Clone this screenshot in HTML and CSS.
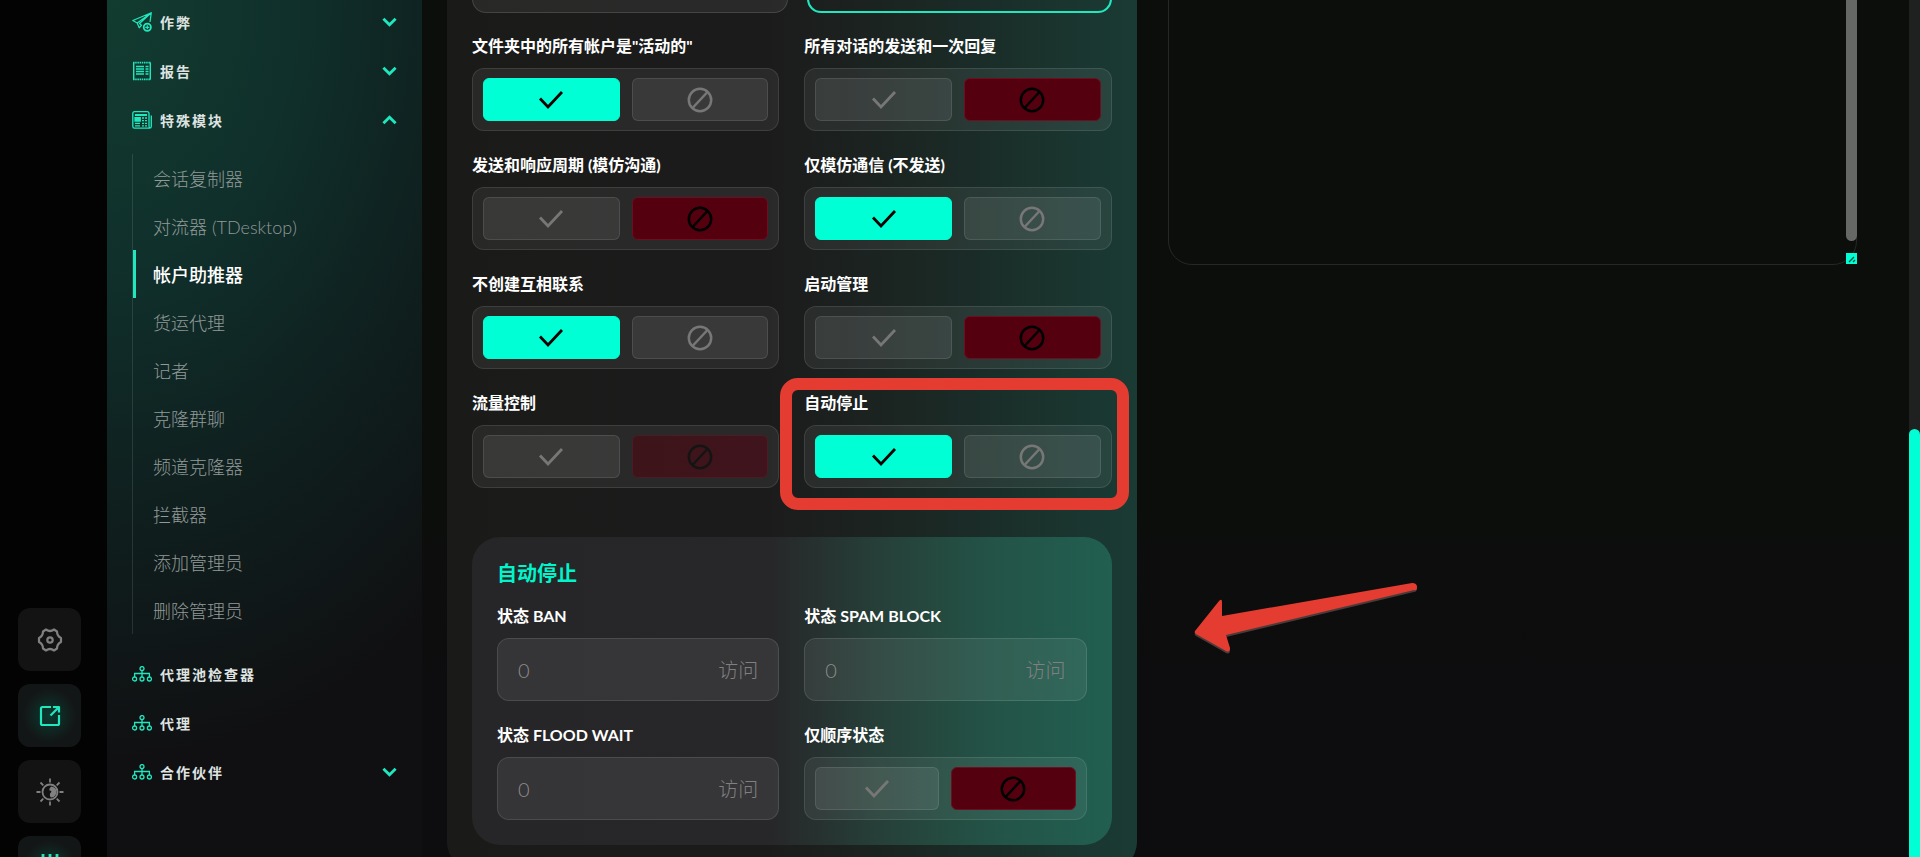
FILE: index.html
```html
<!DOCTYPE html>
<html lang="zh-CN">
<head>
    <meta charset="UTF-8">
    <meta name="viewport" content="width=device-width, initial-scale=1.0">
    <title>帐户助推器</title>
    <link rel="stylesheet" href="styles.css">
</head>
<body>
    <svg class="sprite">
        <symbol id="i-check" viewBox="0 0 26 20"><path d="M2 8.5l8 8.5L24 2" fill="none" stroke="currentColor" stroke-width="2.8"/></symbol>
        <symbol id="i-ban" viewBox="0 0 26 26"><g fill="none" stroke="currentColor" stroke-width="2.5"><circle cx="13" cy="13" r="11.2"/><path d="M5.5 21L20.5 5"/></g></symbol>
        <symbol id="i-down" viewBox="0 0 16 10"><path d="M1.5 1.5L8 8l6.500-6.500" fill="none" stroke="currentColor" stroke-width="3"/></symbol>
        <symbol id="i-tree" viewBox="0 0 20 16"><g fill="none" stroke="currentColor" stroke-width="1.300"><circle cx="10" cy="2.600" r="2"/><circle cx="2.600" cy="13" r="2"/><circle cx="10" cy="13" r="2"/><circle cx="17.400" cy="13" r="2"/><path d="M10 4.600V11M2.600 11V7.500h14.800V11"/></g></symbol>
    </svg>

    <div class="app">
        <aside class="rail">
            <button class="rail-btn">
                <svg width="26" height="26" viewBox="0 0 26 26" fill="none" stroke="currentColor" stroke-width="2.200" stroke-linejoin="round"><path d="M9 2.500Q13 5.500 17 2.500L20 4.500Q20 9 24 11V15Q20 17 20 21.500L17 23.500Q13 20.500 9 23.500L6 21.500Q6 17 2 15V11Q6 9 6 4.500Z"/><circle cx="13" cy="13" r="2.700"/></svg>
            </button>
            <button class="rail-btn rail-btn-on">
                <svg width="22" height="22" viewBox="0 0 22 22" fill="none" stroke="currentColor" stroke-width="2.200"><path d="M12 2H3.500Q2 2 2 3.500V18.500Q2 20 3.500 20H18.500Q20 20 20 18.500V10M14 2H20.500M20 1.500V7.500M20 2L11.500 10.500"/></svg>
            </button>
            <button class="rail-btn">
                <svg width="28" height="28" viewBox="0 0 28 28" fill="none" stroke="currentColor" stroke-width="1.800"><circle cx="14" cy="14" r="7.500"/><path d="M15 8.500a5.500 5.500 0 1 1 0 11a4 4 0 0 1-1-4q3-3-.5-3q-.5-2 1.500-4z" fill="currentColor" stroke="none"/><path d="M14 .5v4M14 23.500v4M.5 14h4M23.500 14h4M4.500 4.500l2.800 2.800M20.700 20.700l2.800 2.800M4.500 23.500l2.800-2.800M20.700 7.300l2.800-2.800"/></svg>
            </button>
            <button class="rail-btn rail-btn-on">
                <svg width="22" height="30" viewBox="0 0 22 30" fill="none" stroke="currentColor" stroke-width="2.800"><path d="M4 1V29M11 1V29M18 1V29"/></svg>
            </button>
        </aside>

        <nav class="sidebar">
            <a class="nav-item" href="#">
                <svg class="nav-icon" viewBox="0 0 20 20" fill="none" stroke="currentColor" stroke-width="1.200" stroke-linejoin="round"><path d="M19.300.7L.8 8.500l4.400 2.600L19.300.7L18 10M5.200 11.100l2 4.700 2.500-2.800M19.300.7L7.500 11.500l2.200 2"/><circle cx="15.300" cy="15.300" r="3.600" stroke-width="1.800"/><path d="M15.300 13.300v4M13.300 15.300h4"/></svg>
                <span>作弊</span>
                <svg class="chevron"><use href="#i-down"/></svg>
            </a>
            <a class="nav-item" href="#">
                <svg class="nav-icon" viewBox="0 0 20 20" fill="none" stroke="currentColor" stroke-width="1.400"><path d="M1.700 1.500V18.500M18.300 1.500V18.500"/><path d="M1 1.700H19M1 18.300H19" stroke-width="1.800" stroke-dasharray="1.500 .7"/><path d="M4 5.500h8M4 8h8M4 10.500h8M4 13h8M13.500 5.500h3M13.500 8h3M13.500 10.500h3M13.500 13h3"/></svg>
                <span>报告</span>
                <svg class="chevron"><use href="#i-down"/></svg>
            </a>
            <a class="nav-item" href="#">
                <svg class="nav-icon" viewBox="0 0 20 20" fill="none" stroke="currentColor" stroke-width="1.300"><path d="M17 16V3.500Q17 1.700 15.200 1.700H2.500Q.8 1.700.8 3.500V16.500Q.8 18.200 2.500 18.200H17.500Q19.300 18.200 19.300 16.500V5.500M17 16Q17 18 18.200 18"/><path d="M3 5h12" stroke-width="2"/><path d="M3 7.700h5.200V11H3z" fill="currentColor"/><path d="M10 8h2M13 8h2M10 10.700h2M13 10.700h2M3 13.300h5M10 13.300h2M13 13.300h2M3 15.800h5M10 15.800h2M13 15.800h2"/></svg>
                <span>特殊模块</span>
                <svg class="chevron chevron-up"><use href="#i-down"/></svg>
            </a>
            <div class="submenu">
                <a href="#">会话复制器</a>
                <a href="#">对流器 (TDesktop)</a>
                <a href="#" class="active">帐户助推器</a>
                <a href="#">货运代理</a>
                <a href="#">记者</a>
                <a href="#">克隆群聊</a>
                <a href="#">频道克隆器</a>
                <a href="#">拦截器</a>
                <a href="#">添加管理员</a>
                <a href="#">删除管理员</a>
            </div>
            <a class="nav-item" href="#">
                <svg class="nav-icon tree"><use href="#i-tree"/></svg>
                <span>代理池检查器</span>
            </a>
            <a class="nav-item" href="#">
                <svg class="nav-icon tree"><use href="#i-tree"/></svg>
                <span>代理</span>
            </a>
            <a class="nav-item" href="#">
                <svg class="nav-icon tree"><use href="#i-tree"/></svg>
                <span>合作伙伴</span>
                <svg class="chevron"><use href="#i-down"/></svg>
            </a>
        </nav>

        <main class="content">
            <section class="card">
                <div class="top-fields">
                    <div class="top-field"></div>
                    <div class="top-field selected"></div>
                </div>

                <div class="options">
                    <div class="option">
                        <span class="caption" id="c1">文件夹中的所有帐户是"活动的"</span>
                        <div class="toggle" role="radiogroup" aria-labelledby="c1">
                            <label class="yes"><input type="radio" name="o1" checked><svg><use href="#i-check"/></svg></label>
                            <label class="no"><input type="radio" name="o1"><svg><use href="#i-ban"/></svg></label>
                        </div>
                    </div>
                    <div class="option">
                        <span class="caption" id="c2">所有对话的发送和一次回复</span>
                        <div class="toggle" role="radiogroup" aria-labelledby="c2">
                            <label class="yes"><input type="radio" name="o2"><svg><use href="#i-check"/></svg></label>
                            <label class="no"><input type="radio" name="o2" checked><svg><use href="#i-ban"/></svg></label>
                        </div>
                    </div>
                    <div class="option">
                        <span class="caption" id="c3">发送和响应周期 (模仿沟通)</span>
                        <div class="toggle" role="radiogroup" aria-labelledby="c3">
                            <label class="yes"><input type="radio" name="o3"><svg><use href="#i-check"/></svg></label>
                            <label class="no"><input type="radio" name="o3" checked><svg><use href="#i-ban"/></svg></label>
                        </div>
                    </div>
                    <div class="option">
                        <span class="caption" id="c4">仅模仿通信 (不发送)</span>
                        <div class="toggle" role="radiogroup" aria-labelledby="c4">
                            <label class="yes"><input type="radio" name="o4" checked><svg><use href="#i-check"/></svg></label>
                            <label class="no"><input type="radio" name="o4"><svg><use href="#i-ban"/></svg></label>
                        </div>
                    </div>
                    <div class="option">
                        <span class="caption" id="c5">不创建互相联系</span>
                        <div class="toggle" role="radiogroup" aria-labelledby="c5">
                            <label class="yes"><input type="radio" name="o5" checked><svg><use href="#i-check"/></svg></label>
                            <label class="no"><input type="radio" name="o5"><svg><use href="#i-ban"/></svg></label>
                        </div>
                    </div>
                    <div class="option">
                        <span class="caption" id="c6">启动管理</span>
                        <div class="toggle" role="radiogroup" aria-labelledby="c6">
                            <label class="yes"><input type="radio" name="o6"><svg><use href="#i-check"/></svg></label>
                            <label class="no"><input type="radio" name="o6" checked><svg><use href="#i-ban"/></svg></label>
                        </div>
                    </div>
                    <div class="option">
                        <span class="caption" id="c7">流量控制</span>
                        <div class="toggle" role="radiogroup" aria-labelledby="c7">
                            <label class="yes"><input type="radio" name="o7"><svg><use href="#i-check"/></svg></label>
                            <label class="no faded"><input type="radio" name="o7" checked><svg><use href="#i-ban"/></svg></label>
                        </div>
                    </div>
                    <div class="option marked">
                        <span class="caption" id="c8">自动停止</span>
                        <div class="toggle" role="radiogroup" aria-labelledby="c8">
                            <label class="yes"><input type="radio" name="o8" checked><svg><use href="#i-check"/></svg></label>
                            <label class="no"><input type="radio" name="o8"><svg><use href="#i-ban"/></svg></label>
                        </div>
                    </div>
                </div>

                <div class="panel">
                    <h2>自动停止</h2>
                    <div class="options">
                        <div class="option">
                            <label class="caption" for="ban">状态 BAN</label>
                            <div class="field"><input id="ban" type="text" placeholder="0"><span>访问</span></div>
                        </div>
                        <div class="option">
                            <label class="caption" for="spam">状态 SPAM BLOCK</label>
                            <div class="field"><input id="spam" type="text" placeholder="0"><span>访问</span></div>
                        </div>
                        <div class="option">
                            <label class="caption" for="flood">状态 FLOOD WAIT</label>
                            <div class="field"><input id="flood" type="text" placeholder="0"><span>访问</span></div>
                        </div>
                        <div class="option">
                            <span class="caption" id="c9">仅顺序状态</span>
                            <div class="toggle" role="radiogroup" aria-labelledby="c9">
                                <label class="yes"><input type="radio" name="o9"><svg><use href="#i-check"/></svg></label>
                                <label class="no"><input type="radio" name="o9" checked><svg><use href="#i-ban"/></svg></label>
                            </div>
                        </div>
                    </div>
                </div>
            </section>

            <section class="log">
                <textarea class="log-text" readonly></textarea>
                <div class="log-thumb"></div>
                <svg class="log-grip" viewBox="0 0 11 11"><path d="M3 9l5-5M7 9l2-2" stroke="#064a40" stroke-width="1.200"/></svg>
                <svg class="arrow" viewBox="0 0 226 74">
                    <path class="arrow-shadow" d="M2 51L26 21Q29 18 29 22V36L219 3Q224 2 224 6T221 10L33 55L37 68Q37 73 33 71L3 54Q1 53 2 51Z"/>
                    <path d="M2 49L26 19Q29 16 29 20V34L219 1Q224 1 224 5T221 8L33 53L37 66Q37 71 33 69L3 52Q1 51 2 49Z"/>
                </svg>
            </section>
        </main>

        <div class="scroll-track"><div class="scroll-thumb"></div></div>
    </div>
</body>
</html>
```

FILE: styles.css
```css
* {
    box-sizing: border-box;
}

body {
    margin: 0;
    overflow: hidden;
    font-family: Lato, 'Noto Sans CJK SC', sans-serif;
    background: linear-gradient(#0c0e0c 60%, #0d0c0e 80%);
    color: #fff;
}

a {
    color: inherit;
    text-decoration: none;
}

.sprite {
    display: none;
}

.app {
    display: flex;
    height: 100vh;
    overflow: hidden;
}

/* icon rail */
.rail {
    display: flex;
    flex-direction: column;
    justify-content: flex-end;
    align-items: flex-start;
    gap: 13px;
    flex: 0 0 107px;
    padding-left: 18px;
    margin-bottom: -42px;
    background: #030303;
}

.rail-btn {
    display: flex;
    justify-content: center;
    align-items: center;
    flex: none;
    width: 63px;
    height: 63px;
    padding: 0;
    border: 0;
    border-radius: 12px;
    background: #131313;
    color: #808080;
}

.rail-btn-on {
    background: radial-gradient(circle, #0b3a30, #131616 60%);
    color: #1fe8bf;
}

/* sidebar */
.sidebar {
    flex: 0 0 315px;
    background: radial-gradient(ellipse 540px 760px at 0 0, #123c30, #10302b 35%, #0f201f 65%, #101012 100%);
}

.nav-item {
    display: flex;
    align-items: center;
    gap: 8px;
    height: 49px;
    padding: 0 25px;
    color: #dfe3e1;
    font-size: 14px;
    font-weight: bold;
    letter-spacing: 2px;
}

.nav-item:first-child {
    margin-top: -3px;
}

.nav-icon {
    width: 20px;
    height: 20px;
    color: #1fe8bf;
}

.nav-icon.tree {
    height: 16px;
}

.chevron {
    width: 15px;
    height: 10px;
    margin-left: auto;
    color: #1fe8bf;
}

.chevron-up {
    transform: rotate(180deg);
}

.submenu {
    margin: 10px 25px 15px;
    border-left: 1px solid #ffffff1c;
}

.submenu a {
    display: flex;
    align-items: center;
    height: 48px;
    padding-left: 20px;
    color: #929a98;
    font-size: 18px;
    font-weight: 300;
}

.submenu .active {
    padding-left: 17px;
    border-left: 3px solid #1fe8bf;
    color: #fff;
    font-weight: 500;
}

/* content */
.content {
    display: grid;
    grid-template-columns: repeat(2, minmax(0, 1fr));
    gap: 31px;
    flex: 1;
    align-items: start;
    padding: 0 52px 0 25px;
}

.card {
    padding: 0 25px 25px;
    border-radius: 0 0 28px 28px;
    background: linear-gradient(90deg, #1a1b19, #1c1b1c 46%, #1b2421 64%, #1a3b34);
}

.top-fields {
    display: flex;
    gap: 19px;
    height: 62px;
    margin: -49px 0 23px;
}

.top-field {
    flex: 1 1 316px;
    border: 1px solid #ffffff22;
    border-radius: 14px;
    background: #ffffff10;
}

.top-field.selected {
    flex-basis: 305px;
    border: 2px solid #1fe8bf;
    background: none;
}

.options {
    display: grid;
    grid-template-columns: repeat(2, minmax(0, 1fr));
    gap: 24px 25px;
}

.option {
    display: flex;
    flex-direction: column;
    gap: 12px;
}

.caption {
    font-size: 16px;
    font-weight: bold;
    line-height: 20px;
}

.toggle {
    display: flex;
    gap: 12px;
    padding: 9px 10px;
    border: 1px solid #ffffff1a;
    border-radius: 12px;
    background: #ffffff10;
}

.toggle label {
    display: flex;
    justify-content: center;
    align-items: center;
    flex: 1;
    height: 43px;
    border: 1px solid #ffffff1a;
    border-radius: 6px;
    background: #ffffff14;
    color: #777;
}

.toggle input {
    position: absolute;
    opacity: 0;
}

.toggle svg {
    width: 26px;
    height: 26px;
}

.toggle .yes:has(input:checked) {
    border-color: #00ffd4;
    background: #00ffd4;
    color: #000;
}

.toggle .no:has(input:checked) {
    border-color: #6b1020;
    background: #54000f;
    color: #000;
}

.toggle .no.faded {
    opacity: 0.5;
}

.marked {
    position: relative;
}

.marked::after {
    content: '';
    position: absolute;
    inset: -15px -17px -22px -24px;
    border: 12px solid #e43c30;
    border-radius: 18px;
    pointer-events: none;
}

.panel {
    margin-top: 49px;
    padding: 24px 25px 25px;
    border-radius: 28px;
    background: linear-gradient(90deg, #262527, #272628 46%, #264039 64%, #235447 82%, #215f51);
}

.panel h2 {
    margin: 0 0 21px;
    color: #00f5cc;
    font-size: 20px;
    line-height: 24px;
}

.field {
    display: flex;
    align-items: center;
    height: 63px;
    padding: 0 20px;
    border: 1px solid #ffffff1c;
    border-radius: 12px;
    background: #ffffff12;
    color: #808080;
    font-size: 20px;
    font-weight: 300;
}

.field input {
    flex: 1;
    min-width: 0;
    padding: 0;
    border: 0;
    outline: 0;
    background: none;
    color: inherit;
    font: inherit;
}

.field input::placeholder {
    color: #8c8c8c;
}

/* log */
.log {
    position: relative;
}

.log-text {
    display: block;
    width: 100%;
    height: 314px;
    margin-top: -49px;
    border: 1px solid #262826;
    border-radius: 24px;
    background: none;
    color: #fff;
    resize: none;
}

.log-thumb {
    position: absolute;
    top: -49px;
    right: 0;
    width: 11px;
    height: 290px;
    border-radius: 6px;
    background: #666866;
}

.log-grip {
    position: absolute;
    right: 0;
    bottom: 1px;
    width: 11px;
    height: 11px;
    background: #00ffd4;
}

.arrow {
    position: absolute;
    top: 582px;
    left: 25px;
    width: 226px;
    fill: #e43c30;
}

.arrow-shadow {
    fill: #4a3b3a;
}

/* page scrollbar */
.scroll-track {
    flex: 0 0 11px;
    padding-top: 50vh;
    background: #1f2020;
}

.scroll-thumb {
    height: 100%;
    border-radius: 6px 6px 0 0;
    background: #00ffd4;
}
```
